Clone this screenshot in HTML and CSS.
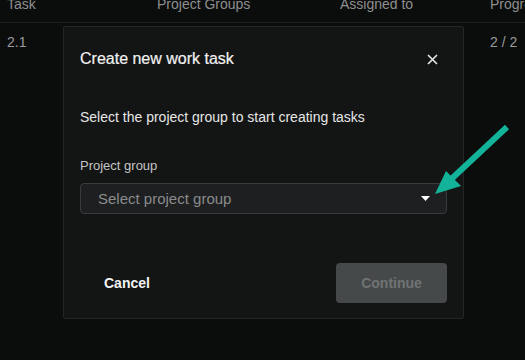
FILE: index.html
```html
<!DOCTYPE html>
<html lang="en">
<head>
  <meta charset="UTF-8">
  <meta name="viewport" content="width=device-width, initial-scale=1">
  <title>Create new work task</title>
  <link rel="stylesheet" href="styles.css">
</head>
<body>

<div class="tabela">
  <div class="linha cabecalho">
    <span>Task</span>
    <span>Project Groups</span>
    <span>Assigned to</span>
    <span>Progress</span>
  </div>
  <div class="linha">
    <span>2.1</span>
    <span></span>
    <span></span>
    <span>2 / 2</span>
  </div>
</div>

<div class="modal">
  <div class="modal-topo">
    <h3>Create new work task</h3>
    <button class="fechar" aria-label="Close">
      <svg width="11" height="11" viewBox="0 0 11 11">
        <path d="M1 1 L10 10 M10 1 L1 10" stroke="#e8e8e8" stroke-width="1.6" fill="none"/>
      </svg>
    </button>
  </div>

  <p class="descricao">Select the project group to start creating tasks</p>

  <label class="rotulo">Project group</label>
  <div class="seletor">
    <span>Select project group</span>
    <svg width="9" height="5" viewBox="0 0 9 5"><path d="M0 0 H9 L4.5 5 Z" fill="#ffffff"/></svg>
  </div>

  <div class="acoes">
    <button class="cancelar">Cancel</button>
    <button class="continuar" disabled>Continue</button>
  </div>
</div>

<!-- seta de destaque -->
<svg class="seta" width="525" height="360" viewBox="0 0 525 360">
  <line x1="507" y1="127" x2="446" y2="184" stroke="#12b398" stroke-width="6"/>
  <polygon points="435,194 446,171 461,186" fill="#12b398"/>
</svg>

</body>
</html>
```

FILE: styles.css
```css
body {
  font-family: "Liberation Sans", Arial, sans-serif;
  background-color: #0b0c0c;
  margin: 0;
  width: 525px;
  height: 360px;
  overflow: hidden;
  position: relative;
}

.tabela {
  margin-top: -10px;
}

.linha {
  display: grid;
  grid-template-columns: 150px 183px 150px auto;
  padding-left: 7px;
  font-size: 14px;
  line-height: 16px;
  color: #8e8f8f;
  white-space: nowrap;
}

.cabecalho {
  padding-top: 6px;
  padding-bottom: 10px;
  border-bottom: 1px solid #1c1d1d;
}

.linha:not(.cabecalho) {
  padding-top: 11px;
  color: #9a9b9b;
}

.modal {
  position: absolute;
  left: 63px;
  top: 26px;
  width: 367px;
  height: 269px;
  padding: 22px 16px 0 16px;
  background-color: #131414;
  border: 1px solid #242525;
  border-radius: 2px;
  display: flex;
  flex-direction: column;
}

.modal-topo {
  display: flex;
  justify-content: space-between;
  align-items: center;
  height: 20px;
}

.modal-topo h3 {
  margin: 0;
  font-size: 16px;
  font-weight: normal;
  color: #f2f2f2;
  -webkit-text-stroke: 0.2px #f2f2f2;
}

.fechar {
  background: none;
  border: none;
  padding: 0;
  margin-right: 9px;
  width: 11px;
  height: 11px;
  display: flex;
  cursor: pointer;
}

.descricao {
  margin: 38px 0 0 0;
  font-size: 14px;
  line-height: 20px;
  color: #e6e6e6;
}

.rotulo {
  margin-top: 31px;
  font-size: 13px;
  line-height: 16px;
  color: #c4c5c5;
}

.seletor {
  margin-top: 9px;
  height: 29px;
  border: 1px solid #3a3b3c;
  border-radius: 4px;
  background-color: #1e1f20;
  display: flex;
  align-items: center;
  justify-content: space-between;
  padding: 0 16px 0 17px;
  font-size: 15px;
  color: #8a8b8c;
}

.acoes {
  margin-top: 49px;
  display: flex;
  justify-content: space-between;
}

.acoes button {
  font-family: inherit;
  font-size: 14px;
  font-weight: bold;
  border: none;
  border-radius: 4px;
  height: 40px;
  padding: 0 24px;
}

.cancelar {
  background: none;
  color: #f4f4f4;
  cursor: pointer;
}

.continuar {
  width: 111px;
  background-color: #464949;
  color: #707374;
}

.seta {
  position: absolute;
  left: 0;
  top: 0;
  pointer-events: none;
}
```
